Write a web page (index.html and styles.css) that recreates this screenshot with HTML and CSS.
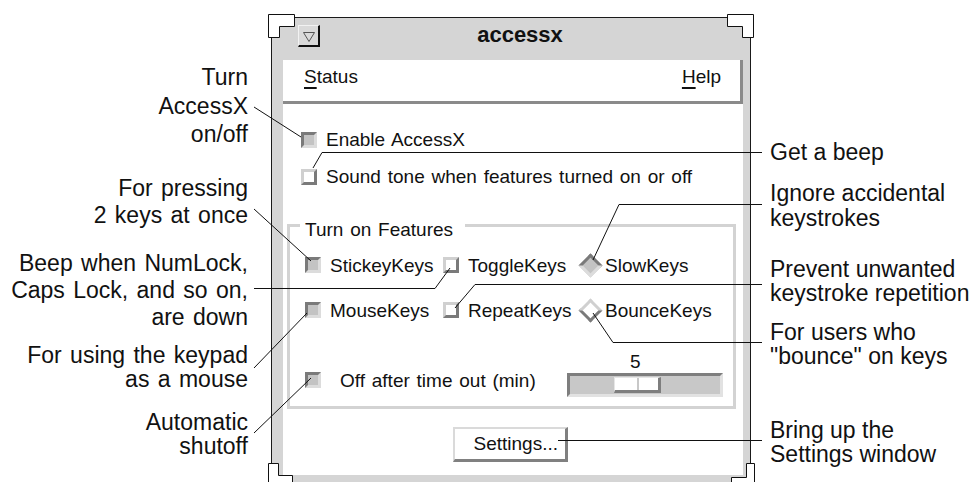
FILE: index.html
```html
<!DOCTYPE html>
<html lang="en">
  <head>
    <meta charset="utf-8" />
    <title>accessx - annotated</title>
    <link rel="stylesheet" href="styles.css">
  </head>
  <body>
    <div class="figure">

      <!-- callouts, left side -->
      <div class="notes notes-left">
        <p class="note n-turn">Turn<br>AccessX<br>on/off</p>
        <p class="note n-press">For pressing<br>2 keys at once</p>
        <p class="note n-beep">Beep when NumLock,<br>Caps Lock, and so on,<br>are down</p>
        <p class="note n-mouse">For using the keypad<br>as a mouse</p>
        <p class="note n-auto">Automatic<br>shutoff</p>
      </div>

      <!-- the accessx window -->
      <div class="window">
        <div class="titlebar">
          <span class="win-menu">
            <svg width="14" height="14" viewBox="0 0 14 14">
              <polygon points="1.5,3.5 12.5,3.5 7,12.5" fill="none" stroke="#555" stroke-width="1"/>
            </svg>
          </span>
          <span class="win-title">accessx</span>
        </div>

        <div class="menubar">
          <span><u>S</u>tatus</span>
          <span><u>H</u>elp</span>
        </div>

        <div class="panel">
          <div class="row">
            <span class="check on"></span>
            <span class="row-text">Enable AccessX</span>
          </div>
          <div class="row">
            <span class="check"></span>
            <span class="row-text">Sound tone when features turned on or off</span>
          </div>

          <fieldset class="features">
            <legend>Turn on Features</legend>
            <div class="feature-grid">
              <label class="feature"><span class="check on"></span>StickeyKeys</label>
              <label class="feature"><span class="check"></span>ToggleKeys</label>
              <label class="feature radio"><span class="diamond"><span class="check on"></span></span>SlowKeys</label>
              <label class="feature"><span class="check on"></span>MouseKeys</label>
              <label class="feature"><span class="check"></span>RepeatKeys</label>
              <label class="feature radio"><span class="diamond"><span class="check"></span></span>BounceKeys</label>
            </div>

            <div class="timeout">
              <span class="check on"></span>
              <span class="timeout-label">Off after time out (min)</span>
              <div class="slider">
                <span class="slider-value">5</span>
                <div class="slider-trough"><span class="slider-thumb"></span></div>
              </div>
            </div>
          </fieldset>

          <div class="actions">
            <button class="btn">Settings...</button>
          </div>
        </div>
      </div>

      <!-- callouts, right side -->
      <div class="notes notes-right">
        <p class="note n-getbeep">Get a beep</p>
        <p class="note n-ignore">Ignore accidental<br>keystrokes</p>
        <p class="note n-prevent">Prevent unwanted<br>keystroke repetition</p>
        <p class="note n-bounce">For users who<br>"bounce" on keys</p>
        <p class="note n-settings">Bring up the<br>Settings window</p>
      </div>

      <!-- leader lines and window corners -->
      <svg class="overlay" width="971" height="482" viewBox="0 0 971 482">
        <g fill="#fff" stroke="#111" stroke-width="1">
          <polygon points="268.5,14.5 294.5,14.5 294.5,26.5 279.5,26.5 279.5,37.5 268.5,37.5"/>
          <polygon points="727.5,14.5 753.5,14.5 753.5,37.5 742.5,37.5 742.5,26.5 727.5,26.5"/>
          <polygon points="268.5,490 268.5,463.5 278.5,463.5 278.5,475.5 292.5,475.5 292.5,490"/>
          <polygon points="754.5,490 754.5,463.5 746.5,463.5 746.5,477.5 731.5,477.5 731.5,490"/>
        </g>
        <g fill="none" stroke="#111" stroke-width="1">
          <line x1="254" y1="107" x2="301" y2="137"/>
          <line x1="254" y1="209" x2="311" y2="261"/>
          <polyline points="254,288.5 435,288.5 450,268"/>
          <line x1="254" y1="368" x2="307" y2="313"/>
          <line x1="254" y1="433" x2="311" y2="378"/>

          <polyline points="313,168 322,152.5 762,152.5"/>
          <polyline points="593,260 619,204.5 762,204.5"/>
          <polyline points="455,308 475,284.5 762,284.5"/>
          <polyline points="593,313 613,342.5 762,342.5"/>
          <line x1="558" y1="440.5" x2="762" y2="440.5"/>
        </g>
      </svg>
    </div>
  </body>
</html>
```

FILE: styles.css
```css
body {
  margin: 0;
  background: #fff;
  color: #111;
  font-family: "Liberation Sans", Arial, sans-serif;
}

.figure {
  position: relative;
  display: flex;
  width: 971px;
  height: 482px;
  overflow: hidden;
}

/* ---- callouts ---- */

.notes {
  position: relative;
  flex: none;
}
.notes-left {
  width: 271px;
}
.notes-right {
  flex: 1;
}

.note {
  position: absolute;
  margin: 0;
  font-size: 23px;
  line-height: 24px;
  white-space: nowrap;
}
.notes-left .note {
  right: 23px;
  text-align: right;
  word-spacing: 2px;
}
.notes-right .note {
  left: 19px;
}

.n-turn { top: 63px; line-height: 28.5px; }
.n-press { top: 175px; line-height: 27px; }
.n-beep { top: 250px; line-height: 27px; }
.n-mouse { top: 343px; }
.n-auto { top: 410px; }

.n-getbeep { top: 140px; }
.n-ignore { top: 181px; line-height: 25px; }
.n-prevent { top: 257px; }
.n-bounce { top: 320px; }
.n-settings { top: 418px; }

.overlay {
  position: absolute;
  left: 0;
  top: 0;
  pointer-events: none;
}

/* ---- window ---- */

.window {
  flex: none;
  box-sizing: border-box;
  width: 480px;
  height: 480px;
  margin-top: 17px;
  padding: 0 7px 0 11px;
  border: 1px solid #1a1a1a;
  border-bottom: none;
  background: #d5d5d5;
  font-size: 19px;
  line-height: 19px;
  word-spacing: 1.5px;
}

.titlebar {
  display: flex;
  align-items: flex-start;
  height: 42px;
  box-sizing: border-box;
  padding: 7px 23px 0 15px;
}
.win-menu {
  display: flex;
  align-items: center;
  justify-content: center;
  width: 22px;
  height: 22px;
  box-sizing: border-box;
  border: 1px solid #f2f2f2;
  border-right: 2px solid #111;
  border-bottom: 2px solid #111;
  background: #dadada;
}
.win-title {
  flex: 1;
  margin-top: -1px;
  text-align: center;
  font-size: 22px;
  line-height: 22px;
  font-weight: bold;
  word-spacing: 0;
}

.menubar {
  display: flex;
  justify-content: space-between;
  height: 44px;
  box-sizing: border-box;
  padding: 7px 19px 0 21px;
  background: #fff;
  border-right: 3px solid #8a8a8a;
  border-bottom: 3px solid #8a8a8a;
}
.menubar u {
  text-decoration-thickness: 2px;
  text-underline-offset: 4px;
}

.panel {
  height: 371px;
  box-sizing: border-box;
  padding-top: 26px;
  background: #fff;
}

.row {
  display: flex;
  align-items: center;
  gap: 9px;
  height: 20px;
  margin-left: 18px;
}
.row + .row {
  margin-top: 17px;
}
.row-text {
  padding-bottom: 2px;
}

.check {
  flex: none;
  width: 16px;
  height: 16px;
  box-sizing: border-box;
  border: 3px solid;
  border-color: #d0d0d0 #7a7a7a #7a7a7a #d0d0d0;
  background: #fff;
}
.check.on {
  border-color: #7a7a7a #dcdcdc #dcdcdc #7a7a7a;
  background: #c3c3c3;
}

/* ---- features group ---- */

.features {
  min-width: 0;
  margin: 24px 7px 0 4px;
  padding: 16px 10px 16px 15px;
  border: 3px solid #d3d3d3;
}
.features legend {
  margin-left: -5px;
  padding: 9px 12px 0 5px;
  line-height: 19px;
}

.feature-grid {
  display: grid;
  grid-template-columns: 138px 135px auto;
  row-gap: 25px;
}
.feature {
  display: flex;
  align-items: center;
  gap: 9px;
  height: 20px;
}
.feature.radio {
  gap: 3px;
}
.diamond {
  display: flex;
  align-items: center;
  justify-content: center;
  width: 24px;
  height: 20px;
}
.diamond .check {
  width: 17px;
  height: 17px;
  transform: rotate(45deg);
}

.timeout {
  display: flex;
  align-items: center;
  height: 20px;
  margin-top: 50px;
}
.timeout-label {
  margin-left: 19px;
}

.slider {
  display: flex;
  flex-direction: column;
  width: 156px;
  margin-left: auto;
  margin-bottom: -7px;
  align-self: flex-end;
}
.slider-value {
  padding-left: 63px;
  margin-bottom: 2px;
}
.slider-trough {
  display: flex;
  height: 24px;
  box-sizing: border-box;
  padding: 1px 0 0 44px;
  border: 3px solid;
  border-color: #7e7e7e #e2e2e2 #e2e2e2 #7e7e7e;
  background: #c8c8c8;
}
.slider-thumb {
  width: 47px;
  height: 16px;
  box-sizing: border-box;
  border: 1px solid #e6e6e6;
  border-right: 3px solid #7e7e7e;
  border-bottom: 3px solid #7e7e7e;
  background: linear-gradient(to right, #fff 22px, #c8c8c8 22px, #c8c8c8 24px, #fff 24px);
}

/* ---- button ---- */

.actions {
  display: flex;
  justify-content: center;
  margin-top: 18px;
  padding-right: 6px;
}
.btn {
  width: 115px;
  height: 35px;
  box-sizing: border-box;
  padding: 0 0 0 19px;
  border: 2px solid;
  border-color: #dadada #808080 #808080 #dadada;
  border-right-width: 3px;
  border-bottom-width: 3px;
  background: #fff;
  color: #111;
  font-family: "Liberation Sans", Arial, sans-serif;
  font-size: 19px;
  text-align: left;
}
```
